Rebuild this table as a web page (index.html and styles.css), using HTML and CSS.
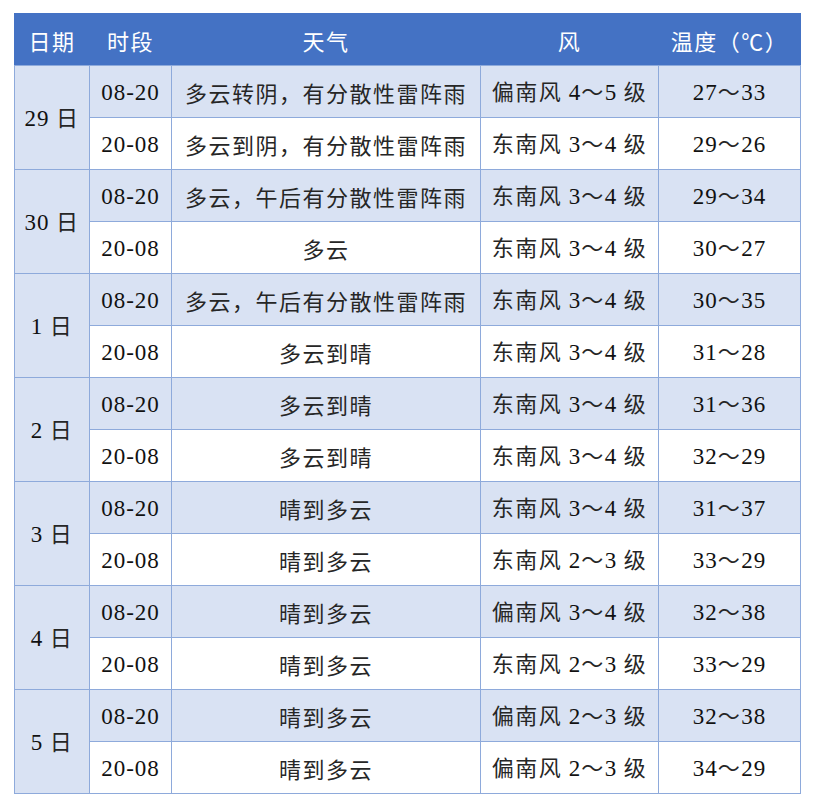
FILE: index.html
```html
<!DOCTYPE html>
<html lang="zh">
<head>
<meta charset="utf-8">
<title>天气预报</title>
<link rel="stylesheet" href="styles.css">
</head>
<body>
<table class="forecast">
  <colgroup>
    <col class="c-date"><col class="c-time"><col class="c-weather"><col class="c-wind"><col class="c-temp">
  </colgroup>
  <thead>
    <tr><th>日期</th><th>时段</th><th>天气</th><th>风</th><th>温度（℃）</th></tr>
  </thead>
  <tbody>
    <tr class="shade"><td class="date" rowspan="2"><span class="n">29</span> 日</td><td><span class="n">08-20</span></td><td>多云转阴，有分散性雷阵雨</td><td>偏南风 <span class="n">4</span>～<span class="n">5</span> 级</td><td><span class="n">27</span>～<span class="n">33</span></td></tr>
    <tr><td><span class="n">20-08</span></td><td>多云到阴，有分散性雷阵雨</td><td>东南风 <span class="n">3</span>～<span class="n">4</span> 级</td><td><span class="n">29</span>～<span class="n">26</span></td></tr>
    <tr class="shade"><td class="date" rowspan="2"><span class="n">30</span> 日</td><td><span class="n">08-20</span></td><td>多云，午后有分散性雷阵雨</td><td>东南风 <span class="n">3</span>～<span class="n">4</span> 级</td><td><span class="n">29</span>～<span class="n">34</span></td></tr>
    <tr><td><span class="n">20-08</span></td><td>多云</td><td>东南风 <span class="n">3</span>～<span class="n">4</span> 级</td><td><span class="n">30</span>～<span class="n">27</span></td></tr>
    <tr class="shade"><td class="date" rowspan="2"><span class="n">1</span> 日</td><td><span class="n">08-20</span></td><td>多云，午后有分散性雷阵雨</td><td>东南风 <span class="n">3</span>～<span class="n">4</span> 级</td><td><span class="n">30</span>～<span class="n">35</span></td></tr>
    <tr><td><span class="n">20-08</span></td><td>多云到晴</td><td>东南风 <span class="n">3</span>～<span class="n">4</span> 级</td><td><span class="n">31</span>～<span class="n">28</span></td></tr>
    <tr class="shade"><td class="date" rowspan="2"><span class="n">2</span> 日</td><td><span class="n">08-20</span></td><td>多云到晴</td><td>东南风 <span class="n">3</span>～<span class="n">4</span> 级</td><td><span class="n">31</span>～<span class="n">36</span></td></tr>
    <tr><td><span class="n">20-08</span></td><td>多云到晴</td><td>东南风 <span class="n">3</span>～<span class="n">4</span> 级</td><td><span class="n">32</span>～<span class="n">29</span></td></tr>
    <tr class="shade"><td class="date" rowspan="2"><span class="n">3</span> 日</td><td><span class="n">08-20</span></td><td>晴到多云</td><td>东南风 <span class="n">3</span>～<span class="n">4</span> 级</td><td><span class="n">31</span>～<span class="n">37</span></td></tr>
    <tr><td><span class="n">20-08</span></td><td>晴到多云</td><td>东南风 <span class="n">2</span>～<span class="n">3</span> 级</td><td><span class="n">33</span>～<span class="n">29</span></td></tr>
    <tr class="shade"><td class="date" rowspan="2"><span class="n">4</span> 日</td><td><span class="n">08-20</span></td><td>晴到多云</td><td>偏南风 <span class="n">3</span>～<span class="n">4</span> 级</td><td><span class="n">32</span>～<span class="n">38</span></td></tr>
    <tr><td><span class="n">20-08</span></td><td>晴到多云</td><td>东南风 <span class="n">2</span>～<span class="n">3</span> 级</td><td><span class="n">33</span>～<span class="n">29</span></td></tr>
    <tr class="shade"><td class="date" rowspan="2"><span class="n">5</span> 日</td><td><span class="n">08-20</span></td><td>晴到多云</td><td>偏南风 <span class="n">2</span>～<span class="n">3</span> 级</td><td><span class="n">32</span>～<span class="n">38</span></td></tr>
    <tr><td><span class="n">20-08</span></td><td>晴到多云</td><td>偏南风 <span class="n">2</span>～<span class="n">3</span> 级</td><td><span class="n">34</span>～<span class="n">29</span></td></tr>
  </tbody>
</table>
</body>
</html>
```
FILE: styles.css
```css
html, body {
  margin: 0;
  padding: 0;
  background: #ffffff;
}
body {
  padding: 13px 0 0 14px;
}
.forecast {
  border-collapse: collapse;
  table-layout: fixed;
  width: 786px;
  font-family: "Noto Sans CJK SC", sans-serif;
  font-size: 22px;
  letter-spacing: 1.5px;
  color: #262626;
}
.forecast .n {
  font-family: "Liberation Serif", "Times New Roman", serif;
  font-size: 23px;
  letter-spacing: 1px;
  color: #111111;
}
.c-date { width: 75px; }
.c-time { width: 82px; }
.c-weather { width: 309px; }
.c-wind { width: 178px; }
.c-temp { width: 142px; }
.forecast th,
.forecast td {
  padding: 0;
  text-align: center;
  vertical-align: middle;
  white-space: nowrap;
  line-height: 30px;
}
.forecast th {
  height: 51px;
  background: #4472c4;
  color: #ffffff;
  font-weight: normal;
  border: 1px solid #4472c4;
  border-bottom-color: #8eaadb;
}
.forecast td {
  height: 51px;
  border: 1px solid #8eaadb;
  background: #ffffff;
}
.forecast tr.shade td,
.forecast td.date {
  background: #d9e2f3;
}
```
